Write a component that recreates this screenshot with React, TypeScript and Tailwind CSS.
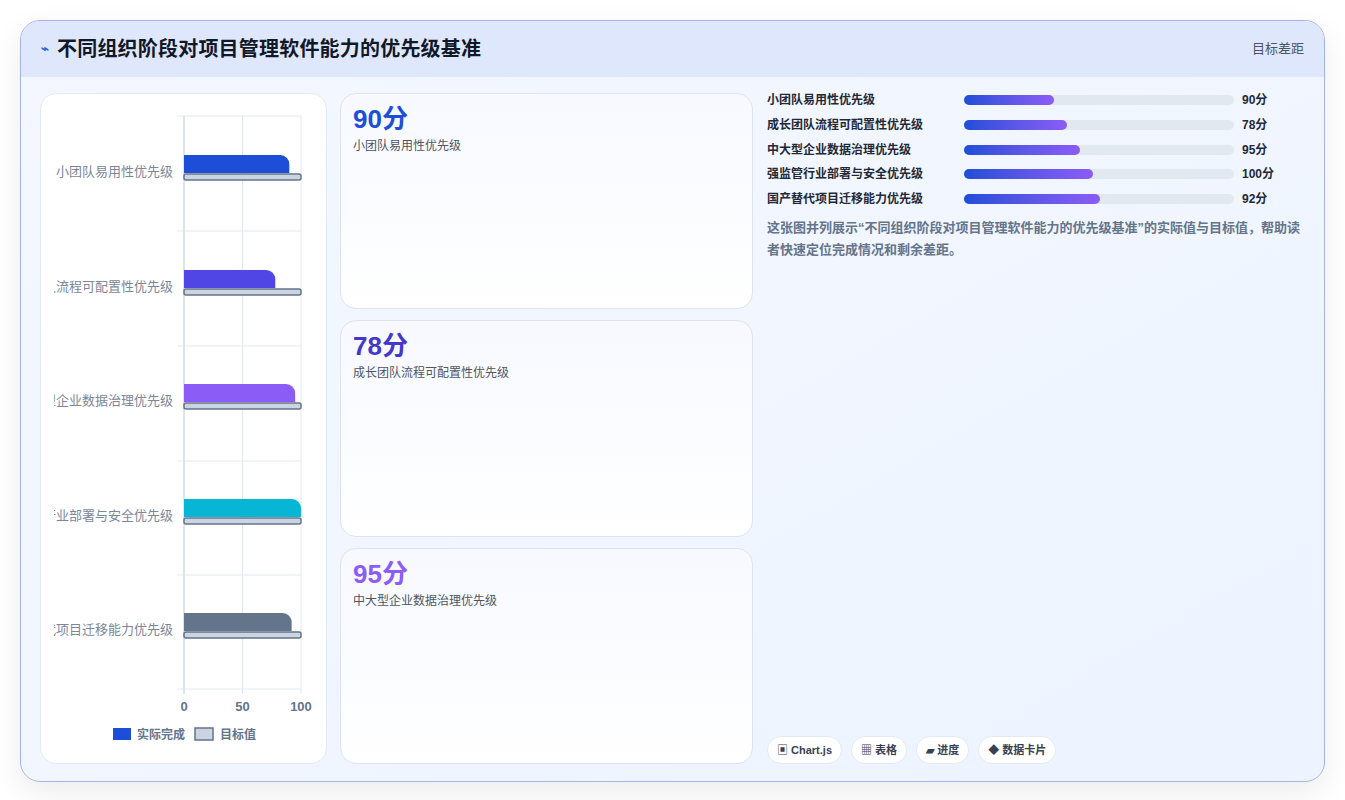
import React from "react";

const rows = [
  { name: "小团队易用性优先级", v: 90, c: "#1d4ed8", w: 90 },
  { name: "成长团队流程可配置性优先级", v: 78, c: "#4f46e5", w: 103 },
  { name: "中大型企业数据治理优先级", v: 95, c: "#8b5cf6", w: 116 },
  { name: "强监管行业部署与安全优先级", v: 100, c: "#06b6d4", w: 129 },
  { name: "国产替代项目迁移能力优先级", v: 92, c: "#64748b", w: 136 },
];

function Chart() {
  const x0 = 143, sc = 1.17;
  const centers = [78, 193, 307, 422, 536];
  return (
    <svg width="286" height="669" className="block">
      <defs>
        <clipPath id="cl"><rect x="13" y="0" width="280" height="669" /></clipPath>
      </defs>
      {[0, 50, 100].map((t) => (
        <line key={t} x1={x0 + t * sc} x2={x0 + t * sc} y1={22} y2={600} stroke="#e2e8f0" />
      ))}
      {[22, 137, 252, 367, 481, 595].map((y) => (
        <line key={y} x1={x0 - 7} x2={260} y1={y} y2={y} stroke="#e2e8f0" />
      ))}
      <line x1={x0} x2={x0} y1={22} y2={600} stroke="#cbd5e1" />
      <g clipPath="url(#cl)">
        {rows.map((r, i) => (
          <text key={i} x={132} y={centers[i] + 4} textAnchor="end" fontSize="13" fill="#7c8699">{r.name}</text>
        ))}
      </g>
      {rows.map((r, i) => {
        const c = centers[i];
        const w = r.v * sc;
        return (
          <g key={i}>
            <path d={`M${x0} ${c - 17} H${x0 + w - 9} A9 9 0 0 1 ${x0 + w} ${c - 8} V${c + 1} H${x0} Z`} fill={r.c} />
            <rect x={x0} y={c + 2} width={100 * sc} height={6} rx={2} fill="#cbd5e1" stroke="#64748b" strokeWidth="1.5" />
          </g>
        );
      })}
      {[0, 50, 100].map((t) => (
        <text key={t} x={x0 + t * sc} y={617} textAnchor="middle" fontSize="13" fontWeight="bold" fill="#64748b">{t}</text>
      ))}
      <rect x={72} y={634} width={18} height={12} fill="#1d4ed8" />
      <text x={96} y={645} fontSize="12" fontWeight="bold" fill="#64748b">实际完成</text>
      <rect x={154} y={634} width={18} height={12} fill="#cbd5e1" stroke="#64748b" strokeWidth="1.5" />
      <text x={179} y={645} fontSize="12" fontWeight="bold" fill="#64748b">目标值</text>
    </svg>
  );
}

export default function App() {
  const font = { fontFamily: '"Liberation Sans", "Noto Sans CJK SC", sans-serif' };
  const cards = [
    { v: "90分", n: "小团队易用性优先级", c: "text-[#1d4ed8]" },
    { v: "78分", n: "成长团队流程可配置性优先级", c: "text-[#4338ca]" },
    { v: "95分", n: "中大型企业数据治理优先级", c: "text-[#8b5cf6]" },
  ];
  return (
    <div style={font} className="w-[1345px] h-[800px] bg-white pt-[20px] px-[20px]">
      <div className="w-[1305px] h-[762px] rounded-[20px] border border-[#a5b4e8] bg-gradient-to-br from-[#f4f7ff] to-[#edf4ff] shadow-[0_10px_30px_rgba(0,0,0,0.08)] overflow-hidden flex flex-col">
        <div className="h-[56px] shrink-0 bg-[#dfe7fd] flex items-center justify-between pl-[20px] pr-[20px]">
          <div className="flex items-center gap-[8px]">
            <span className="text-[#2563eb] text-[13px] font-bold">⌁</span>
            <span className="text-[20px] font-bold text-[#111827] tracking-[0.2px]">不同组织阶段对项目管理软件能力的优先级基准</span>
          </div>
          <span className="text-[13px] text-[#4b5563]">目标差距</span>
        </div>
        <div className="flex-1 flex gap-[13px] px-[19px] pt-[16px] pb-[18px]">
          <div className="w-[287px] bg-white rounded-[16px] border border-[#e5e9f2] overflow-hidden">
            <Chart />
          </div>
          <div className="w-[413px] flex flex-col gap-[11px]">
            {cards.map((c, i) => (
              <div key={i} className="flex-1 rounded-[16px] border border-[#dde3ef] bg-gradient-to-b from-[#f7f9ff] to-white px-[12px] pt-[10px]">
                <div className={`text-[26px] font-bold leading-[30px] ${c.c}`}>{c.v}</div>
                <div className="text-[12px] text-[#4b5563] mt-[3px]">{c.n}</div>
              </div>
            ))}
          </div>
          <div className="flex-1 flex flex-col pl-[1px]">
            <div className="flex flex-col gap-[6.8px] -mt-[2px]">
              {rows.map((r, i) => (
                <div key={i} className="flex items-center h-[18px]">
                  <span className="w-[197px] text-[12px] font-bold text-[#1f2937]">{r.name}</span>
                  <div className="w-[270px] h-[10px] rounded-full bg-[#e2e8f0]">
                    <div className="h-full rounded-full bg-gradient-to-r from-[#1d4ed8] to-[#8b5cf6]" style={{ width: r.w }} />
                  </div>
                  <span className="ml-[8px] text-[12px] font-bold text-[#1f2937]">{r.v}分</span>
                </div>
              ))}
            </div>
            <p className="mt-[9px] text-[13px] leading-[22px] font-bold text-[#64748b] pr-[2px]">
              这张图并列展示“不同组织阶段对项目管理软件能力的优先级基准”的实际值与目标值，帮助读者快速定位完成情况和剩余差距。
            </p>
            <div className="mt-auto flex gap-[9px]">
              {["▣ Chart.js", "▦ 表格", "▰ 进度", "◆ 数据卡片"].map((t) => (
                <span key={t} className="h-[28px] px-[9px] flex items-center rounded-full bg-white border border-[#e5e9f2] text-[11px] font-bold text-[#374151]">{t}</span>
              ))}
            </div>
          </div>
        </div>
      </div>
    </div>
  );
}
